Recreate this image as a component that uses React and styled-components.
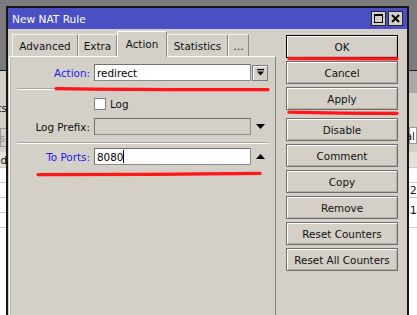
import React from "react";
import styled, { createGlobalStyle } from "styled-components";

const Global = createGlobalStyle`
  html, body { margin: 0; padding: 0; background: #7b7b7b; overflow: hidden; }
  body { font-family: "DejaVu Sans", "Noto Sans", sans-serif; font-size: 10.4px; }
  #root { width: 417px; height: 315px; }
`;

const Desktop = styled.div`
  position: relative;
  width: 417px;
  height: 315px;
  overflow: hidden;
  background: #7b7b7b;
`;

/* ---------- background application (mostly hidden) ---------- */
const BgWindow = styled.div`
  position: absolute;
  top: 70px;
  left: 0;
  right: 0;
  bottom: 0;
  border-top: 1px solid #1e1e1e;
  background: #d4d0c8;
  display: flex;
  flex-direction: column;
`;
const BgBand = styled.div`
  display: grid;
  grid-template-columns: 7px 1fr 8px;
  height: ${(p) => p.h}px;
  background: ${(p) => p.bg || "#d4d0c8"};
  border-bottom: ${(p) => (p.line ? "1px solid #c8c8c8" : "none")};
  box-sizing: border-box;
`;
const BgCell = styled.div`
  display: flex;
  align-items: center;
  justify-content: ${(p) => (p.end ? "flex-end" : "flex-start")};
  white-space: nowrap;
  color: ${(p) => p.color || "#111"};
  background: ${(p) => p.bg || "transparent"};
  padding-left: ${(p) => (p.end ? 0 : 1)}px;
  padding-top: ${(p) => p.pt || 0}px;
  font-size: 10.4px;
  overflow: visible;
`;
const BgBox = styled.div`
  margin: ${(p) => p.m || "5px 0"};
  border: 1px solid #9a9a9a;
  background: ${(p) => p.bg || "#d4d0c8"};
  display: flex;
  align-items: center;
  justify-content: ${(p) => (p.end ? "flex-end" : "flex-start")};
  padding: 0 1px;
  color: ${(p) => p.color || "#111"};
  white-space: nowrap;
`;
const BgRows = styled.div`
  flex: 1;
  background: #fff;
`;

/* ---------- dialog window ---------- */
const Dialog = styled.div`
  position: absolute;
  left: 6px;
  top: 6px;
  width: 403px;
  height: 330px;
  box-sizing: border-box;
  border: 2px solid #161616;
  background: #d4d0c8;
  display: flex;
  flex-direction: column;
`;
const TitleBar = styled.div`
  height: 21px;
  flex: none;
  background: #4a4fc6;
  display: flex;
  align-items: center;
  justify-content: space-between;
  padding: 0 4px;
  color: #fff;
`;
const Title = styled.span`
  font-size: 10.6px;
`;
const TitleButtons = styled.div`
  display: flex;
  gap: 2px;
`;
const TitleButton = styled.div`
  width: 15px;
  height: 15px;
  box-sizing: border-box;
  border: 1px solid #262626;
  background: #d4d0c8;
  display: flex;
  align-items: center;
  justify-content: center;
`;

const Body = styled.div`
  flex: 1;
  display: flex;
  gap: 10px;
  padding: 2px 9px 0 1px;
`;
const LeftCol = styled.div`
  width: 267px;
  display: flex;
  flex-direction: column;
`;
const TabStrip = styled.div`
  height: 25px;
  flex: none;
  display: flex;
  align-items: flex-end;
  padding-left: 3px;
  position: relative;
  z-index: 1;
`;
const Tab = styled.div`
  width: ${(p) => p.w}px;
  height: ${(p) => (p.selected ? 26 : 22)}px;
  margin-bottom: ${(p) => (p.selected ? -1 : 0)}px;
  padding-bottom: ${(p) => (p.selected ? 1 : 0)}px;
  box-sizing: border-box;
  border-top: 1px solid ${(p) => (p.selected ? "#ffffff" : "#f2f1ee")};
  border-left: 1px solid ${(p) => (p.selected ? "#ffffff" : "#f2f1ee")};
  border-right: 1px solid #8a8a8a;
  background: #d4d0c8;
  display: flex;
  align-items: center;
  justify-content: center;
  color: #111;
  white-space: nowrap;
`;
const Panel = styled.div`
  flex: 1;
  box-sizing: border-box;
  border-top: 1px solid #ffffff;
  border-left: 1px solid #ffffff;
  border-right: 1px solid #808080;
  box-shadow: inset 1px 0 0 #b8b5ae;
  padding-top: 7px;
  display: flex;
  flex-direction: column;
`;
const FieldRow = styled.div`
  display: grid;
  grid-template-columns: 84px 157px 16px;
  align-items: center;
  height: 17px;
  margin-top: ${(p) => p.mt || 0}px;
`;
const Label = styled.div`
  text-align: right;
  padding-right: 4px;
  color: ${(p) => (p.blue ? "#1a1aee" : "#111")};
  white-space: nowrap;
`;
const Input = styled.div`
  height: 17px;
  box-sizing: border-box;
  border: 1px solid #8c8c8c;
  border-top-color: #707070;
  border-left-color: #707070;
  background: ${(p) => (p.disabled ? "#d4d0c8" : "#ffffff")};
  display: flex;
  align-items: center;
  padding-left: 2px;
  color: #000;
  white-space: nowrap;
`;
const Caret = styled.span`
  display: inline-block;
  width: 1px;
  height: 13px;
  background: #000;
`;
const DropButton = styled.div`
  width: 16px;
  height: 16px;
  margin-left: 1px;
  box-sizing: border-box;
  border: 1px solid #7a7a7a;
  box-shadow: inset 1px 1px 0 #fff;
  background: #d4d0c8;
  display: flex;
  align-items: center;
  justify-content: center;
`;
const ArrowCell = styled.div`
  display: flex;
  align-items: center;
  justify-content: center;
  padding-left: 3px;
`;
const Divider = styled.div`
  margin: ${(p) => p.mt}px 7px 0 7px;
  border-top: 1px solid #a9a6a0;
  border-bottom: 1px solid #ffffff;
`;
const CheckLine = styled.div`
  display: flex;
  align-items: center;
  gap: 4px;
  margin-left: 84px;
  margin-top: ${(p) => p.mt}px;
  height: 12px;
  color: #111;
`;
const CheckBox = styled.div`
  width: 12px;
  height: 12px;
  box-sizing: border-box;
  border: 1px solid #808080;
  background: #fff;
`;

const ButtonCol = styled.div`
  width: 112px;
  display: flex;
  flex-direction: column;
  gap: 3px;
  padding-top: 4px;
`;
const DialogButton = styled.div`
  height: 23px;
  flex: none;
  box-sizing: border-box;
  border: 1px solid ${(p) => (p.primary ? "#000" : "#6f6f6f")};
  box-shadow: inset 1px 1px 0 #ffffff, inset -1px -1px 0 #b3b0a9;
  background: #d4d0c8;
  display: flex;
  align-items: center;
  justify-content: center;
  color: #111;
  margin-top: ${(p) => p.mt || 0}px;
  white-space: nowrap;
`;

const Marks = styled.svg`
  position: absolute;
  left: 0;
  top: 0;
  width: 417px;
  height: 315px;
  pointer-events: none;
`;

const tabs = [
  { label: "Advanced", w: 66 },
  { label: "Extra", w: 39 },
  { label: "Action", w: 50, selected: true },
  { label: "Statistics", w: 61 },
  { label: "...", w: 21 },
];

const buttons = [
  { label: "OK", primary: true },
  { label: "Cancel" },
  { label: "Apply" },
  { label: "Disable", mt: 5 },
  { label: "Comment" },
  { label: "Copy" },
  { label: "Remove" },
  { label: "Reset Counters" },
  { label: "Reset All Counters" },
];

const DownTriangle = () => (
  <svg width="9" height="5" viewBox="0 0 9 5">
    <path d="M0 0 H9 L4.5 5 Z" fill="#000" />
  </svg>
);
const UpTriangle = () => (
  <svg width="9" height="5" viewBox="0 0 9 5">
    <path d="M0 5 H9 L4.5 0 Z" fill="#000" />
  </svg>
);

export default function App() {
  return (
    <Desktop>
      <Global />
      <BgWindow>
        <BgBand h={22}>
          <BgCell />
          <BgCell />
          <BgCell bg="#a9a8a4" />
        </BgBand>
        <BgBand h={30}>
          <BgCell end>Hosts</BgCell>
          <BgCell />
          <BgCell />
        </BgBand>
        <BgBand h={29}>
          <BgBox end color="#8e8e8e">Filters</BgBox>
          <BgCell />
          <BgBox end bg="#fff" m="4px 0 8px">Total</BgBox>
        </BgBand>
        <BgBand h={16} bg="#e4e1da" line>
          <BgCell end>Id</BgCell>
          <BgCell />
          <BgCell />
        </BgBand>
        <BgRows>
          <BgBand h={15} bg="#fff" line>
            <BgCell />
            <BgCell />
            <BgCell />
          </BgBand>
          <BgBand h={15} bg="#fff" line>
            <BgCell />
            <BgCell />
            <BgCell>2</BgCell>
          </BgBand>
          <BgBand h={15} bg="#fff" line>
            <BgCell />
            <BgCell />
            <BgCell pt={6}>1</BgCell>
          </BgBand>
          <BgBand h={15} bg="#fff" line>
            <BgCell />
            <BgCell />
            <BgCell />
          </BgBand>
        </BgRows>
      </BgWindow>

      <Dialog>
        <TitleBar>
          <Title>New NAT Rule</Title>
          <TitleButtons>
            <TitleButton>
              <svg width="11" height="11" viewBox="0 0 11 11">
                <rect x="1.5" y="1.5" width="8" height="8" fill="none" stroke="#000" />
                <rect x="1" y="1" width="9" height="2" fill="#000" />
              </svg>
            </TitleButton>
            <TitleButton>
              <svg width="11" height="11" viewBox="0 0 11 11">
                <path d="M2 2 L9 9 M9 2 L2 9" stroke="#000" strokeWidth="2" />
              </svg>
            </TitleButton>
          </TitleButtons>
        </TitleBar>
        <Body>
          <LeftCol>
            <TabStrip>
              {tabs.map((t) => (
                <Tab key={t.label} w={t.w} selected={t.selected}>
                  {t.label}
                </Tab>
              ))}
            </TabStrip>
            <Panel>
              <FieldRow>
                <Label blue>Action:</Label>
                <Input>redirect</Input>
                <DropButton>
                  <svg width="7" height="7" viewBox="0 0 7 7">
                    <rect x="0" y="0" width="7" height="1.2" fill="#000" />
                    <path d="M0 2.4 H7 L3.5 6.5 Z" fill="#000" />
                  </svg>
                </DropButton>
              </FieldRow>
              <Divider mt={7} />
              <CheckLine mt={8}>
                <CheckBox />
                <span>Log</span>
              </CheckLine>
              <FieldRow mt={8}>
                <Label>Log Prefix:</Label>
                <Input disabled />
                <ArrowCell>
                  <DownTriangle />
                </ArrowCell>
              </FieldRow>
              <Divider mt={7} />
              <FieldRow mt={4}>
                <Label blue>To Ports:</Label>
                <Input>
                  8080
                  <Caret />
                </Input>
                <ArrowCell>
                  <UpTriangle />
                </ArrowCell>
              </FieldRow>
            </Panel>
          </LeftCol>
          <ButtonCol>
            {buttons.map((b) => (
              <DialogButton key={b.label} primary={b.primary} mt={b.mt}>
                {b.label}
              </DialogButton>
            ))}
          </ButtonCol>
        </Body>
      </Dialog>

      <Marks viewBox="0 0 417 315">
        <defs>
          <filter id="soft" x="-5%" y="-200%" width="110%" height="500%">
            <feGaussianBlur stdDeviation="0.5" />
          </filter>
        </defs>
        <g stroke="#ff1212" strokeWidth="3.2" strokeLinecap="round" fill="none" filter="url(#soft)">
          <path d="M56 88.6 Q 150 90 268 89.6" />
          <path d="M38 174.6 Q 150 174.6 260 173.4" />
          <path d="M289 58.6 L 397 58.8" />
          <path d="M289 112.2 Q 340 113.4 397 113.4" />
        </g>
      </Marks>
    </Desktop>
  );
}
